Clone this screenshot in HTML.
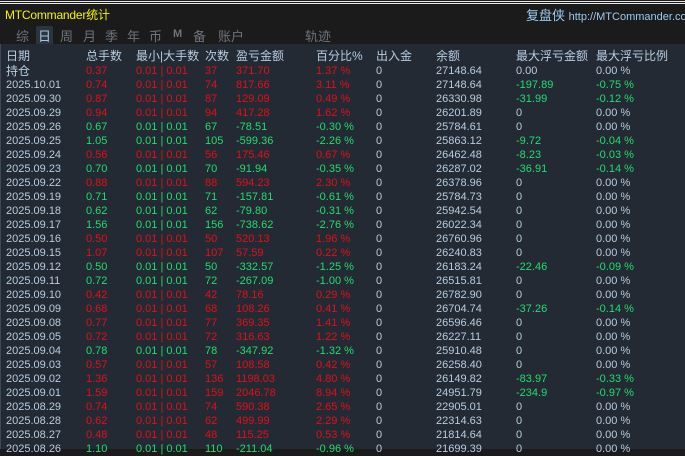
<!DOCTYPE html><html><head><meta charset="utf-8"><style>
*{margin:0;padding:0;box-sizing:border-box}
body{width:685px;height:449px;overflow:hidden;background:#1b1b1b;font-family:"Liberation Sans","Noto Sans CJK SC",sans-serif;position:relative}
.top1{position:absolute;left:0;top:1px;width:685px;height:1px;background:#e8e8e8}
.top2{position:absolute;left:0;top:3px;width:685px;height:1px;background:#e8e8e8}
.title{position:absolute;left:5px;top:6px;color:#f4f400;font-size:12px;letter-spacing:-0.2px}
.rt{position:absolute;left:526px;top:5px;color:#9ccaf0;font-size:13px;white-space:nowrap}
.rt span{font-size:11px}
.tab{position:absolute;top:26px;color:#6c737c;font-size:13px}
.sel{background:#2c3440;color:#a8c4e0;padding:0 2px;border-radius:2px}
.tbl{position:absolute;left:0;top:44px;width:685px;height:405px;background:#232a33;border-left:1px solid #3a4a5c}
.r{position:absolute;left:0;height:14px;font-size:11px;line-height:14px;white-space:nowrap}
.r span{position:absolute}
.h{color:#b8cce0;font-size:12px}
.g{color:#b8cce0}.R{color:#e0101a}.G{color:#22dc70}
</style></head><body>
<div class="top1"></div><div class="top2"></div>
<div class="title">MTCommander统计</div>
<div class="rt">复盘侠 <span>http://MTCommander.com</span></div>
<div class="tab" style="left:16px">综</div>
<div class="tab sel" style="left:36px">日</div>
<div class="tab" style="left:60px">周</div>
<div class="tab" style="left:83px">月</div>
<div class="tab" style="left:105px">季</div>
<div class="tab" style="left:127px">年</div>
<div class="tab" style="left:149px">币</div>
<div class="tab" style="left:173px;font-size:11px;top:28px;font-weight:bold">M</div>
<div class="tab" style="left:193px">备</div>
<div class="tab" style="left:218px">账户</div>
<div class="tab" style="left:305px">轨迹</div>
<div class="tbl"></div>
<div id="t"></div>
<script>
var X=[6,86,136,205,236,316,376,436,516,596];
var H=["日期","总手数","最小|大手数","次数","盈亏金额","百分比%","出入金","余额","最大浮亏金额","最大浮亏比例"];
var D=[
["持仓","0.37",37,"371.70","1.37 %","27148.64","0.00","0.00 %"],
["2025.10.01","0.74",74,"817.66","3.11 %","27148.64","-197.89","-0.75 %"],
["2025.09.30","0.87",87,"129.09","0.49 %","26330.98","-31.99","-0.12 %"],
["2025.09.29","0.94",94,"417.28","1.62 %","26201.89","0","0.00 %"],
["2025.09.26","0.67",67,"-78.51","-0.30 %","25784.61","0","0.00 %"],
["2025.09.25","1.05",105,"-599.36","-2.26 %","25863.12","-9.72","-0.04 %"],
["2025.09.24","0.56",56,"175.46","0.67 %","26462.48","-8.23","-0.03 %"],
["2025.09.23","0.70",70,"-91.94","-0.35 %","26287.02","-36.91","-0.14 %"],
["2025.09.22","0.88",88,"594.23","2.30 %","26378.96","0","0.00 %"],
["2025.09.19","0.71",71,"-157.81","-0.61 %","25784.73","0","0.00 %"],
["2025.09.18","0.62",62,"-79.80","-0.31 %","25942.54","0","0.00 %"],
["2025.09.17","1.56",156,"-738.62","-2.76 %","26022.34","0","0.00 %"],
["2025.09.16","0.50",50,"520.13","1.96 %","26760.96","0","0.00 %"],
["2025.09.15","1.07",107,"57.59","0.22 %","26240.83","0","0.00 %"],
["2025.09.12","0.50",50,"-332.57","-1.25 %","26183.24","-22.46","-0.09 %"],
["2025.09.11","0.72",72,"-267.09","-1.00 %","26515.81","0","0.00 %"],
["2025.09.10","0.42",42,"78.16","0.29 %","26782.90","0","0.00 %"],
["2025.09.09","0.68",68,"108.26","0.41 %","26704.74","-37.26","-0.14 %"],
["2025.09.08","0.77",77,"369.35","1.41 %","26596.46","0","0.00 %"],
["2025.09.05","0.72",72,"316.63","1.22 %","26227.11","0","0.00 %"],
["2025.09.04","0.78",78,"-347.92","-1.32 %","25910.48","0","0.00 %"],
["2025.09.03","0.57",57,"108.58","0.42 %","26258.40","0","0.00 %"],
["2025.09.02","1.36",136,"1198.03","4.80 %","26149.82","-83.97","-0.33 %"],
["2025.09.01","1.59",159,"2046.78","8.94 %","24951.79","-234.9","-0.97 %"],
["2025.08.29","0.74",74,"590.38","2.65 %","22905.01","0","0.00 %"],
["2025.08.28","0.62",62,"499.99","2.29 %","22314.63","0","0.00 %"],
["2025.08.27","0.48",48,"115.25","0.53 %","21814.64","0","0.00 %"],
["2025.08.26","1.10",110,"-211.04","-0.96 %","21699.39","0","0.00 %"]];
var s='<div class="r h" style="top:49px">';
H.forEach(function(h,i){s+='<span style="left:'+X[i]+'px">'+h+'</span>'});s+='</div>';
D.forEach(function(d,k){
var top=(k==0?64:78+(k-1)*14),c=d[3][0]=='-'?'G':'R',fc=d[6][0]=='-'?'G':'g';
var dc=k==0?'h':'g';
s+='<div class="r" style="top:'+top+'px">';
var v=[[d[0],dc],[d[1],c],["0.01 | 0.01",c],[d[2],c],[d[3],c],[d[4],c],["0","g"],[d[5],"g"],[d[6],fc],[d[7],fc]];
v.forEach(function(x,i){s+='<span class="'+x[1]+'" style="left:'+X[i]+'px'+(k==0&&i==0?';font-size:12px':'')+'">'+x[0]+'</span>'});
s+='</div>';});
document.getElementById('t').innerHTML=s;
</script>
</body></html>
